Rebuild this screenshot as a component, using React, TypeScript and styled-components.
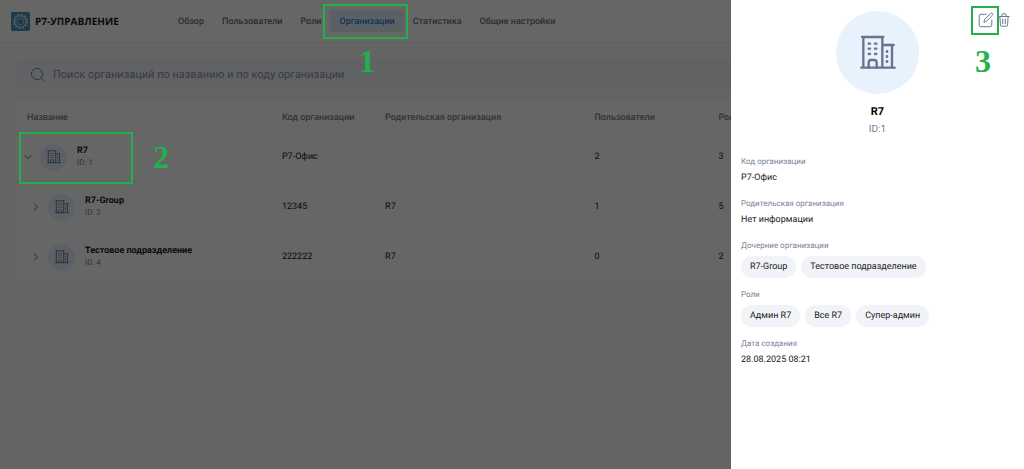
import React from 'react';
import styled, { createGlobalStyle, css } from 'styled-components';

const GlobalStyle = createGlobalStyle`
  *, *::before, *::after { box-sizing: border-box; }
  body {
    margin: 0;
    background: #f9fafa;
    color: #1a1a1a;
    font-family: Roboto, "Liberation Sans", sans-serif;
    font-size: 9px;
    line-height: 12px;
    text-rendering: geometricPrecision;
  }
  button { border: 0; padding: 0; background: none; color: inherit; font: inherit; cursor: pointer; }
`;

const Page = styled.div`
  min-height: 100vh;
  overflow-x: hidden;
`;

const Header = styled.header`
  display: flex;
  align-items: center;
  height: 43px;
  padding: 0 11px;
  background: #ffffff;
  border-bottom: 1px solid #f0f0f0;
`;

const Brand = styled.a`
  display: flex;
  align-items: center;
  gap: 5px;
  width: 158px;
  color: #1c1c1c;
  font: bold 10px/16px "Open Sans", Roboto, sans-serif;
  text-decoration: none;
  white-space: nowrap;
`;

const Nav = styled.nav`
  display: flex;
`;

const NavLink = styled.a<{ $active?: boolean }>`
  padding: 6px 9px 4px;
  border-radius: 3px;
  color: ${(p) => (p.$active ? '#2f7fd6' : '#6c6f75')};
  background: ${(p) => (p.$active ? '#e4f0fa' : 'transparent')};
  font-weight: 500;
  text-decoration: none;
  white-space: nowrap;
`;

const Content = styled.main`
  display: flex;
  flex-direction: column;
  gap: 12px;
  padding: 17px 16px;
`;

const SearchBar = styled.label`
  display: flex;
  align-items: center;
  gap: 8px;
  height: 29px;
  padding: 0 14px;
  border-radius: 4px;
  background: #f3f6fa;
  color: #7c8696;
`;

const SearchInput = styled.input`
  flex: 1;
  border: 0;
  padding: 0;
  outline: 0;
  background: transparent;
  color: #1f1f1f;
  font: 11px/14px Roboto, sans-serif;
  text-rendering: inherit;
  &::placeholder { color: #8b909a; opacity: 1; }
`;

const Card = styled.section`
  border-radius: 4px;
  background: #ffffff;
`;

const Table = styled.table`
  width: 100%;
  border-collapse: collapse;
  table-layout: fixed;
`;

const Col = styled.col<{ $share: number }>`
  width: ${(p) => p.$share}%;
`;

const HeadCell = styled.th`
  height: 30px;
  padding: 4px 11px 0;
  border-bottom: 1px solid #f6f6f6;
  color: #7c7f86;
  font-weight: 500;
  text-align: left;
  white-space: nowrap;
`;

const Cell = styled.td`
  height: 50px;
  padding: 2px 11px 0;
  border-bottom: 1px solid #f6f6f6;
`;

const NameCell = styled(Cell)<{ $level: number }>`
  padding-left: ${(p) => 8 + p.$level * 8}px;
`;

const OrgLine = styled.div`
  display: flex;
  align-items: center;
  gap: 8px;
`;

const Toggle = styled.button`
  display: flex;
  justify-content: center;
  width: 8px;
  color: #5f6672;
`;

const Avatar = styled.span<{ $size: number }>`
  display: flex;
  align-items: center;
  justify-content: center;
  flex: none;
  width: ${(p) => p.$size}px;
  height: ${(p) => p.$size}px;
  border-radius: 50%;
  background: #e7f2fc;
  color: #68748c;
`;

const OrgText = styled.div`
  display: flex;
  flex-direction: column;
  padding-left: 2px;
  white-space: nowrap;
`;

const OrgName = styled.strong`
  font-weight: 700;
`;

const OrgId = styled.span`
  color: #85888f;
  font-size: 8px;
`;

const Backdrop = styled.div`
  position: fixed;
  inset: 0;
  background: rgba(0, 0, 0, 0.6);
`;

const Drawer = styled.aside`
  position: fixed;
  top: 0;
  right: 0;
  bottom: 0;
  width: 293px;
  padding: 11px 10px;
  overflow-y: auto;
  background: #ffffff;
`;

const DrawerHead = styled.div`
  display: grid;
  grid-template-columns: 1fr auto 1fr;
  align-items: start;
`;

const Profile = styled.div`
  grid-column: 2;
  display: flex;
  flex-direction: column;
  align-items: center;
`;

const ProfileName = styled.h2`
  margin: 11px 0 5px;
  color: #000000;
  font-size: 11px;
  line-height: 14px;
`;

const ProfileId = styled.span`
  color: #747d90;
  font-size: 10px;
`;

const Actions = styled.div`
  display: flex;
  justify-content: flex-end;
  gap: 4px;
  padding: 1px 4px;
`;

const IconButton = styled.button`
  position: relative;
  display: flex;
  align-items: center;
  height: 16px;
  color: #6f7a91;
`;

const Details = styled.dl`
  display: flex;
  flex-direction: column;
  gap: 14px;
  margin: 20px 0 0;
`;

const Field = styled.div`
  display: flex;
  flex-direction: column;
  gap: 4px;
`;

const FieldLabel = styled.dt`
  color: #7a8499;
  font-size: 8px;
`;

const FieldValue = styled.dd`
  margin: 0;
  color: #1a1a1a;
`;

const Chips = styled(FieldValue)`
  display: flex;
  flex-wrap: wrap;
  gap: 5px;
  margin-bottom: -3px;
`;

const Chip = styled.span`
  padding: 5px 9px;
  border-radius: 12px;
  background: #f2f3f8;
`;

const green = '#22b14c';

const marker = css`
  position: absolute;
  pointer-events: none;
`;

const Highlight = styled.span<{ $left: number; $top: number; $width: number; $height: number }>`
  ${marker}
  left: ${(p) => p.$left}px;
  top: ${(p) => p.$top}px;
  width: ${(p) => p.$width}px;
  height: ${(p) => p.$height}px;
  border: 2px solid ${green};
`;

const StepNumber = styled.span<{ $left: number; $top: number }>`
  ${marker}
  left: ${(p) => p.$left}px;
  top: ${(p) => p.$top}px;
  color: ${green};
  font: bold 32px/32px "Liberation Serif", serif;
`;

function BuildingIcon({ width }: { width: number }) {
  return (
    <svg width={width} height={width} viewBox="0 0 108 108" fill="none" stroke="currentColor" strokeWidth="7" strokeLinecap="round" strokeLinejoin="round" aria-hidden="true">
      <path d="M6 6H70M10 6V98M67 6V98M4 98H104M67 30H101M96 30V98" />
      <path d="M26 98V82Q26 75 33 75H43Q50 75 50 82V98" />
      <path d="M26 26H30M45 26H49M26 41H30M45 41H49M26 57H30M45 57H49" />
      <path d="M81 49V50M81 64V65M81 79V80" strokeWidth="8" />
    </svg>
  );
}

function LogoIcon() {
  return (
    <svg width="19" height="19" viewBox="0 0 57 57" fill="none" aria-hidden="true">
      <rect width="57" height="57" rx="5" fill="#4a93b8" />
      <circle cx="28.5" cy="28.5" r="21" stroke="#cfdfe8" strokeWidth="4" strokeDasharray="5.5 5.5" />
      <circle cx="28.5" cy="28.5" r="17.5" stroke="#cfdfe8" strokeWidth="4" />
      <circle cx="28.5" cy="28.5" r="10" stroke="#a9d0e4" strokeWidth="3" />
    </svg>
  );
}

function SearchIcon() {
  return (
    <svg width="15" height="15" viewBox="0 0 15 15" fill="none" stroke="currentColor" strokeLinecap="round" aria-hidden="true">
      <circle cx="7" cy="7" r="5.6" />
      <path d="M11 11L14 14" />
    </svg>
  );
}

function Chevron({ open }: { open: boolean }) {
  return (
    <svg width="8" height="8" viewBox="0 0 8 8" fill="none" stroke="currentColor" strokeLinecap="round" strokeLinejoin="round" aria-hidden="true">
      <path d={open ? 'M1 2.5L4 5.5L7 2.5' : 'M2.2 0.8L5.4 4L2.2 7.2'} />
    </svg>
  );
}

function EditIcon() {
  return (
    <svg width="16" height="16" viewBox="0 0 16 16" fill="none" stroke="currentColor" strokeLinecap="round" strokeLinejoin="round" aria-hidden="true">
      <path d="M8 2.3H3Q1.2 2.3 1.2 4V13Q1.2 14.7 3 14.7H12Q13.8 14.7 13.8 13V8" />
      <path d="M6 10L6.6 7.4L12.8 1.4Q13.6 0.8 14.4 1.5Q15.2 2.4 14.5 3.2L8.4 9.3Z" />
    </svg>
  );
}

function TrashIcon() {
  return (
    <svg width="12" height="14" viewBox="0 0 12 14" fill="none" stroke="currentColor" strokeLinecap="round" strokeLinejoin="round" aria-hidden="true">
      <path d="M0.8 3.5H11.2M3.8 3.3V1.7Q3.8 0.8 4.7 0.8H7.3Q8.2 0.8 8.2 1.7V3.3M1.9 3.7L2.4 12Q2.5 13.2 3.6 13.2H8.4Q9.5 13.2 9.6 12L10.1 3.7M4.7 6V10.8M7.3 6V10.8" />
    </svg>
  );
}

const sections = ['Обзор', 'Пользователи', 'Роли', 'Организации', 'Статистика', 'Общие настройки'];

const organizations = [
  { id: 1, name: 'R7', level: 0, code: 'Р7-Офис', parent: '', users: 2, roles: 3 },
  { id: 2, name: 'R7-Group', level: 1, code: '12345', parent: 'R7', users: 1, roles: 5 },
  { id: 4, name: 'Тестовое подразделение', level: 1, code: '222222', parent: 'R7', users: 0, roles: 2 },
];

const columns = [
  { title: 'Название', share: 25.7 },
  { title: 'Код организации', share: 10.4 },
  { title: 'Родительская организация', share: 21.1 },
  { title: 'Пользователи', share: 12.5 },
  { title: 'Роли', share: 30.3 },
];

export default function App() {
  return (
    <>
      <GlobalStyle />
      <Page>
        <Header>
          <Brand href="#">
            <LogoIcon />
            Р7-УПРАВЛЕНИЕ
          </Brand>
          <Nav>
            {sections.map((title) => (
              <NavLink key={title} href="#" $active={title === 'Организации'}>{title}</NavLink>
            ))}
          </Nav>
        </Header>
        <Content>
          <SearchBar>
            <SearchIcon />
            <SearchInput type="text" aria-label="Поиск" placeholder="Поиск организаций по названию и по коду организации" />
          </SearchBar>
          <Card>
            <Table>
              <colgroup>
                {columns.map((c) => <Col key={c.title} $share={c.share} />)}
              </colgroup>
              <thead>
                <tr>{columns.map((c) => <HeadCell key={c.title} scope="col">{c.title}</HeadCell>)}</tr>
              </thead>
              <tbody>
                {organizations.map((org) => (
                  <tr key={org.id}>
                    <NameCell $level={org.level}>
                      <OrgLine>
                        <Toggle type="button" aria-label="Развернуть" aria-expanded={org.level === 0}>
                          <Chevron open={org.level === 0} />
                        </Toggle>
                        <Avatar $size={27}><BuildingIcon width={14} /></Avatar>
                        <OrgText>
                          <OrgName>{org.name}</OrgName>
                          <OrgId>ID: {org.id}</OrgId>
                        </OrgText>
                      </OrgLine>
                    </NameCell>
                    <Cell>{org.code}</Cell>
                    <Cell>{org.parent}</Cell>
                    <Cell>{org.users}</Cell>
                    <Cell>{org.roles}</Cell>
                  </tr>
                ))}
              </tbody>
            </Table>
          </Card>
        </Content>
      </Page>

      <Backdrop />

      <Drawer aria-label="Организация R7">
        <DrawerHead>
          <Profile>
            <Avatar $size={83}><BuildingIcon width={36} /></Avatar>
            <ProfileName>R7</ProfileName>
            <ProfileId>ID:1</ProfileId>
          </Profile>
          <Actions>
            <IconButton type="button" aria-label="Редактировать">
              <EditIcon />
              <Highlight $left={-7} $top={-6} $width={28} $height={29} />
              <StepNumber $left={-3} $top={33}>3</StepNumber>
            </IconButton>
            <IconButton type="button" aria-label="Удалить"><TrashIcon /></IconButton>
          </Actions>
        </DrawerHead>
        <Details>
          <Field>
            <FieldLabel>Код организации</FieldLabel>
            <FieldValue>Р7-Офис</FieldValue>
          </Field>
          <Field>
            <FieldLabel>Родительская организация</FieldLabel>
            <FieldValue>Нет информации</FieldValue>
          </Field>
          <Field>
            <FieldLabel>Дочерние организации</FieldLabel>
            <Chips>
              <Chip>R7-Group</Chip>
              <Chip>Тестовое подразделение</Chip>
            </Chips>
          </Field>
          <Field>
            <FieldLabel>Роли</FieldLabel>
            <Chips>
              <Chip>Админ R7</Chip>
              <Chip>Все R7</Chip>
              <Chip>Супер-админ</Chip>
            </Chips>
          </Field>
          <Field>
            <FieldLabel>Дата создания</FieldLabel>
            <FieldValue>28.08.2025 08:21</FieldValue>
          </Field>
        </Details>
      </Drawer>

      <Highlight $left={323} $top={4} $width={85} $height={35} />
      <StepNumber $left={359} $top={45}>1</StepNumber>
      <Highlight $left={19} $top={132} $width={114} $height={52} />
      <StepNumber $left={153} $top={141}>2</StepNumber>
    </>
  );
}
